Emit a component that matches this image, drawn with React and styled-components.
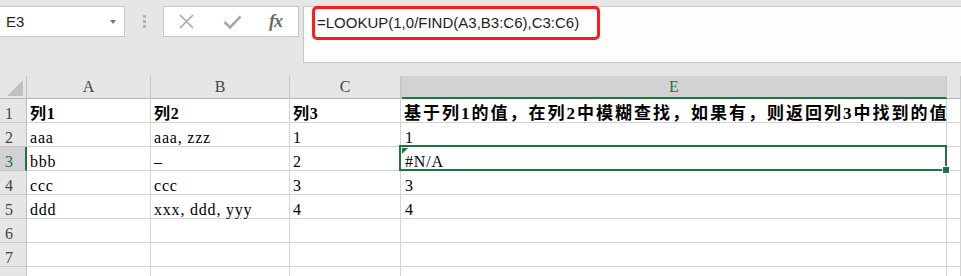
import React from 'react'
import styled, { createGlobalStyle, css } from 'styled-components'

const GlobalStyle = createGlobalStyle`
  body {
    margin: 0;
    background: #e6e6e6;
    font-family: "Liberation Sans", "Noto Sans CJK SC", sans-serif;
  }
`

const Page = styled.div`
  width: 961px;
  height: 276px;
  overflow: hidden;
  background: #e6e6e6;
`

const Toolbar = styled.div`
  display: flex;
  align-items: flex-start;
  height: 76px;
  box-sizing: border-box;
  padding-top: 6px;
`

const NameBox = styled.div`
  width: 125px;
  height: 31px;
  box-sizing: border-box;
  background: #fff;
  border: 1px solid #c6c6c6;
  border-left: none;
  display: flex;
  align-items: center;
  justify-content: space-between;
  padding: 0 8px 0 6px;
  font-size: 15px;
  color: #262626;
`

const Caret = styled.span`
  width: 0;
  height: 0;
  border-left: 3.5px solid transparent;
  border-right: 3.5px solid transparent;
  border-top: 4px solid #777;
`

const Grip = styled.div`
  display: flex;
  flex-direction: column;
  gap: 2px;
  margin: 9px 17px 0 18px;

  & span {
    width: 3px;
    height: 3px;
    background: #b4b4b4;
  }
`

const FxBox = styled.div`
  width: 136px;
  height: 31px;
  box-sizing: border-box;
  background: #fff;
  border: 1px solid #c6c6c6;
  display: flex;
  align-items: center;
  gap: 28px;
  padding-left: 14px;
`

const Fx = styled.span`
  font-family: "Liberation Serif", serif;
  font-style: italic;
  font-weight: bold;
  font-size: 18px;
  color: #6a6a6a;
  margin-left: -1px;
  letter-spacing: -1px;
`

const FormulaBar = styled.div`
  position: relative;
  flex: 1;
  height: 57px;
  box-sizing: border-box;
  margin-left: 4px;
  background: #fdfdfd;
  border: 1px solid #c6c6c6;
  border-right: none;
  padding: 7px 0 0 13px;
  font-size: 15px;
  line-height: 18px;
  color: #1f1f1f;
`

const Highlight = styled.div`
  position: absolute;
  left: 8px;
  top: -1px;
  width: 288px;
  height: 34px;
  box-sizing: border-box;
  border: 3px solid #ff1b1b;
  border-radius: 5px;
`

const Sheet = styled.div`
  display: grid;
  grid-template-columns: 27px 124px 139px 111px 1px 545px 1fr;
  grid-template-rows: 23px repeat(8, 24px);
  font-family: "Liberation Serif", "Noto Sans CJK SC", serif;
  font-size: 16px;
`

const Corner = styled.div`
  background: #e6e6e6;
  border-right: 1px solid #c0c0c0;
  border-bottom: 1px solid #b4b4b4;
  display: flex;
  justify-content: flex-end;
  align-items: flex-end;
  padding: 0 3px 2px 0;

  &::after {
    content: "";
    width: 0;
    height: 0;
    border-left: 16px solid transparent;
    border-bottom: 16px solid #c0c0c0;
  }
`

const ColHead = styled.div`
  background: #e6e6e6;
  border-right: 1px solid #c8c8c8;
  border-bottom: 1px solid #b4b4b4;
  color: #444;
  display: flex;
  justify-content: center;
  align-items: flex-end;
  line-height: 17px;
  padding-bottom: 3px;
  ${(p) =>
    p.$active &&
    css`
      background: #d2d2d2;
      color: #217346;
      border-bottom: 2px solid #217346;
      padding-bottom: 2px;
    `}
`

const RowHead = styled.div`
  background: #e6e6e6;
  border-right: 1px solid #c0c0c0;
  border-bottom: 1px solid #c8c8c8;
  color: #444;
  display: flex;
  align-items: flex-end;
  padding-left: 5px;
  line-height: 17px;
  ${(p) =>
    p.$active &&
    css`
      background: #d2d2d2;
      color: #217346;
      border-right: 2px solid #217346;
    `}
`

const Cell = styled.div`
  position: relative;
  background: #fff;
  border-right: 1px solid #d4d4d4;
  border-bottom: 1px solid #d4d4d4;
  display: flex;
  align-items: flex-end;
  padding-left: 3px;
  line-height: 17px;
  white-space: nowrap;
  letter-spacing: 0.8px;
  color: #000;
  font-weight: ${(p) => (p.$bold ? 'bold' : 'normal')};
  ${(p) =>
    p.$wide &&
    css`
      font-size: 17px;
      letter-spacing: 2px;
      padding-left: 2px;
    `}
  ${(p) =>
    p.$selected &&
    css`
      &::before {
        content: "";
        position: absolute;
        top: 1px;
        left: 0;
        border-top: 6px solid #1e7a3c;
        border-right: 6px solid transparent;
      }
      &::after {
        content: "";
        position: absolute;
        top: -2px;
        left: -3px;
        right: -1px;
        bottom: -1px;
        border: 2px solid #217346;
        z-index: 2;
      }
    `}
`

const FillHandle = styled.span`
  position: absolute;
  right: -4px;
  bottom: -4px;
  width: 6px;
  height: 6px;
  background: #217346;
  border: 1px solid #fff;
  z-index: 3;
`

const cols = ['A', 'B', 'C', 'D', 'E', '']

const rows = [
  ['列1', '列2', '列3', '基于列1的值，在列2中模糊查找，如果有，则返回列3中找到的值'],
  ['aaa', 'aaa, zzz', '1', '1'],
  ['bbb', '–', '2', '#N/A'],
  ['ccc', 'ccc', '3', '3'],
  ['ddd', 'xxx, ddd, yyy', '4', '4'],
  ['', '', '', ''],
  ['', '', '', ''],
  ['', '', '', ''],
]

const CrossIcon = () => (
  <svg width="17" height="15" viewBox="0 0 17 15">
    <path d="M2 1 L15 14 M15 1 L2 14" stroke="#a8a8a8" strokeWidth="1.6" fill="none" />
  </svg>
)

const CheckIcon = () => (
  <svg width="19" height="14" viewBox="0 0 19 14">
    <path d="M1.5 7 L7 12.5 L17.5 1.5" stroke="#a8a8a8" strokeWidth="2.6" fill="none" />
  </svg>
)

export default function App() {
  return (
    <Page>
      <GlobalStyle />
      <Toolbar>
        <NameBox>
          E3
          <Caret />
        </NameBox>
        <Grip>
          <span />
          <span />
          <span />
        </Grip>
        <FxBox>
          <CrossIcon />
          <CheckIcon />
          <Fx>fx</Fx>
        </FxBox>
        <FormulaBar>
          =LOOKUP(1,0/FIND(A3,B3:C6),C3:C6)
          <Highlight />
        </FormulaBar>
      </Toolbar>
      <Sheet>
        <Corner />
        {cols.map((c, i) => (
          <ColHead key={i} $active={c === 'E'}>
            {c === 'D' ? '' : c}
          </ColHead>
        ))}
        {rows.map((r, i) => (
          <React.Fragment key={i}>
            <RowHead $active={i === 2}>{i + 1}</RowHead>
            <Cell $bold={i === 0}>{r[0]}</Cell>
            <Cell $bold={i === 0}>{r[1]}</Cell>
            <Cell $bold={i === 0}>{r[2]}</Cell>
            <Cell />
            <Cell $bold={i === 0} $wide={i === 0} $selected={i === 2}>
              {r[3]}
              {i === 2 && <FillHandle />}
            </Cell>
            <Cell />
          </React.Fragment>
        ))}
      </Sheet>
    </Page>
  )
}
